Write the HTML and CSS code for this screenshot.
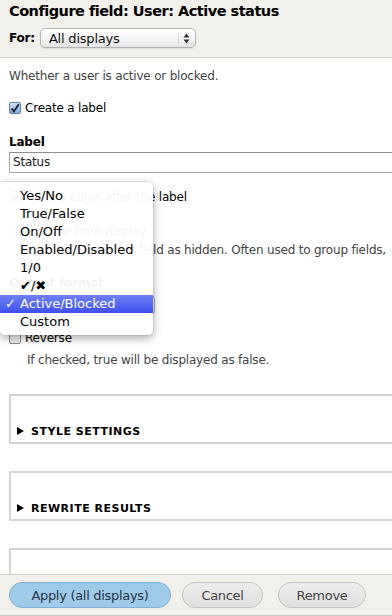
FILE: index.html
```html
<!DOCTYPE html>
<html>
<head>
<meta charset="utf-8">
<link rel="stylesheet" href="styles.css">
</head>
<body>
<div class="dialog">
  <header class="head">
    <h1 class="title">Configure field: User: Active status</h1>
    <div class="for-row">
      <span class="for-label">For:</span>
      <div class="mac-select">
        <span>All displays</span>
        <svg class="updown" width="7" height="11" viewBox="0 0 7 11"><path d="M3.5 0.5 L6.5 4.5 L0.5 4.5 Z M3.5 10.5 L6.5 6.5 L0.5 6.5 Z" fill="#333"/></svg>
      </div>
    </div>
  </header>

  <main class="body">
    <p class="desc">Whether a user is active or blocked.</p>

    <div class="check-row first">
      <span class="box checked"><svg width="10" height="10" viewBox="0 0 10 10"><path d="M1.5 5.5 L4 8.2 L8.8 1.2" fill="none" stroke="#1a1a2e" stroke-width="1.8"/></svg></span>
      <span>Create a label</span>
    </div>

    <div class="field">
      <div class="field-label">Label</div>
      <div class="text-input">Status</div>
    </div>

    <div class="check-row colon">
      <span class="box checked"><svg width="10" height="10" viewBox="0 0 10 10"><path d="M1.5 5.5 L4 8.2 L8.8 1.2" fill="none" stroke="#1a1a2e" stroke-width="1.8"/></svg></span>
      <span>Place a colon after the label</span>
    </div>

    <div class="check-row exclude">
      <span class="box"></span>
      <span>Exclude from display</span>
    </div>
    <p class="help">Enable to load this field as hidden. Often used to group fields,</p>

    <div class="field fmt-field">
      <div class="field-label">Output format</div>
      <div class="fmt-select">Active/Blocked</div>
    </div>

    <div class="check-row reverse">
      <span class="box"></span>
      <span>Reverse</span>
    </div>
    <p class="help help-rev">If checked, true will be displayed as false.</p>

    <div class="fieldset first-set"><svg class="tri" width="7" height="8" viewBox="0 0 7 8"><path d="M0 0 L7 4 L0 8 Z" fill="#000"/></svg>STYLE SETTINGS</div>
    <div class="fieldset"><svg class="tri" width="7" height="8" viewBox="0 0 7 8"><path d="M0 0 L7 4 L0 8 Z" fill="#000"/></svg>REWRITE RESULTS</div>
    <div class="fieldset empty"></div>

    <ul class="popup">
      <li>Yes/No</li>
      <li>True/False</li>
      <li>On/Off</li>
      <li>Enabled/Disabled</li>
      <li>1/0</li>
      <li>&#10004;/&#10006;</li>
      <li class="sel"><span class="tick">&#10003;</span>Active/Blocked</li>
      <li>Custom</li>
    </ul>
  </main>

  <footer class="foot">
    <button class="btn primary">Apply (all displays)</button>
    <button class="btn cancel">Cancel</button>
    <button class="btn remove">Remove</button>
  </footer>
</div>
</body>
</html>
```

FILE: styles.css
```css
html, body {
  margin: 0;
  padding: 0;
  background: #fff;
}
body {
  font-family: "DejaVu Sans", "Noto Sans", sans-serif;
  color: #000;
  width: 392px;
  height: 616px;
  overflow: hidden;
}
.dialog {
  display: flex;
  flex-direction: column;
  height: 616px;
}
.head {
  background: #f1f0eb;
  border-bottom: 1px solid #c9c9c4;
  padding: 2px 9px 0 9px;
  height: 55px;
  box-sizing: content-box;
}
.title {
  margin: 0;
  font-size: 14.5px;
  letter-spacing: -0.5px;
  font-weight: bold;
  line-height: 18px;
  white-space: nowrap;
}
.for-row {
  display: flex;
  align-items: center;
  gap: 5px;
  margin-top: 8px;
}
.for-label {
  font-size: 12px;
  font-weight: bold;
  letter-spacing: -0.2px;
}
.mac-select {
  width: 156px;
  height: 20px;
  box-sizing: border-box;
  border: 1px solid #b2b2b2;
  border-radius: 5px;
  background: linear-gradient(#ffffff, #f3f3f3 55%, #e4e4e4);
  display: flex;
  align-items: center;
  justify-content: space-between;
  padding: 0 5px 0 8px;
  font-size: 13px;
  letter-spacing: -0.2px;
  color: #111;
  box-shadow: 0 1px 1px rgba(0,0,0,0.08);
}
.updown {
  border-left: 1px solid #d8d8d8;
  padding-left: 4px;
}
.body {
  flex: 1;
  position: relative;
  overflow: hidden;
  padding: 0 0 0 9px;
  font-size: 12px;
  letter-spacing: -0.2px;
}
.desc {
  margin: 10px 0 0 0;
  color: #444;
  line-height: 16px;
}
.check-row {
  display: flex;
  align-items: center;
  gap: 4px;
  line-height: 16px;
}
.first {
  margin-top: 16px;
}
.box {
  width: 12px;
  height: 12px;
  box-sizing: border-box;
  border: 1px solid #8c8c8c;
  border-radius: 2px;
  background: linear-gradient(#fdfdfd, #e8e8e8);
  display: flex;
  align-items: center;
  justify-content: center;
}
.box.checked {
  background: linear-gradient(#d3e3f7, #7ea7dc);
  border-color: #5c7fae;
}
.field {
  margin-top: 18px;
}
.field-label {
  font-weight: bold;
  line-height: 16px;
}
.text-input {
  margin-top: 2px;
  height: 21px;
  box-sizing: border-box;
  border: 1px solid #a6a6a6;
  border-top-color: #8f8f8f;
  border-right: none;
  padding: 0 3px;
  line-height: 19px;
  font-size: 12px;
  color: #222;
}
.colon {
  margin-top: 16px;
}
.exclude {
  margin-top: 18px;
}
.help {
  margin: 3px 0 0 18px;
  color: #444;
  line-height: 16px;
  white-space: nowrap;
}
.help-rev {
  margin-top: 6px;
}
.fmt-field {
  margin-top: 17px;
}
.fmt-select {
  margin-top: 4px;
  width: 146px;
  height: 20px;
  border: 1px solid #aaa;
  border-radius: 4px;
  box-sizing: border-box;
  padding-left: 8px;
  line-height: 18px;
}
.reverse {
  margin-top: 15px;
}
.fieldset {
  margin-top: 27px;
  height: 50px;
  box-sizing: border-box;
  border: 2px solid #d4d4d4;
  border-right: none;
  padding: 24px 0 0 6px;
  font-size: 11px;
  font-weight: bold;
  letter-spacing: 0.5px;
  line-height: 17px;
  display: flex;
  align-items: center;
}
.fieldset.first-set {
  margin-top: 26px;
}
.fieldset.empty {
  height: 60px;
}
.tri {
  margin-right: 7px;
}
.popup {
  position: absolute;
  left: 0;
  top: 124px;
  width: 153px;
  margin: 0;
  padding: 5px 0 4px 0;
  list-style: none;
  background: rgba(255,255,255,0.95);
  border-radius: 0 5px 5px 5px;
  box-shadow: 0 3px 10px rgba(0,0,0,0.35), 0 0 0 1px rgba(0,0,0,0.05);
  font-size: 13px;
  letter-spacing: 0;
  z-index: 5;
}
.popup li {
  position: relative;
  height: 18px;
  line-height: 18px;
  padding-left: 20px;
  color: #000;
}
.popup li.sel {
  background: linear-gradient(#6f80f6, #3e50ef);
  color: #fff;
}
.tick {
  position: absolute;
  left: 5px;
  font-weight: bold;
}
.foot {
  background: #f1f0eb;
  border-top: 1px solid #c9c9c4;
  border-bottom: 1px solid #c9c9c4;
  height: 40px;
  display: flex;
  align-items: center;
  padding: 0 9px;
  gap: 11px;
}
.btn {
  font-family: "DejaVu Sans", "Noto Sans", sans-serif;
  font-size: 13px;
  letter-spacing: -0.3px;
  height: 26px;
  border-radius: 13px;
  border: 1px solid #c4c4c4;
  background: linear-gradient(#ececec, #e0e0e0);
  color: #444;
  padding: 0;
}
.btn.primary {
  width: 162px;
  background: #9fcbea;
  border-color: #7fb1d8;
  color: #263442;
}
.btn.cancel {
  width: 81px;
}
.btn.remove {
  width: 88px;
  margin-left: 4px;
}
```
